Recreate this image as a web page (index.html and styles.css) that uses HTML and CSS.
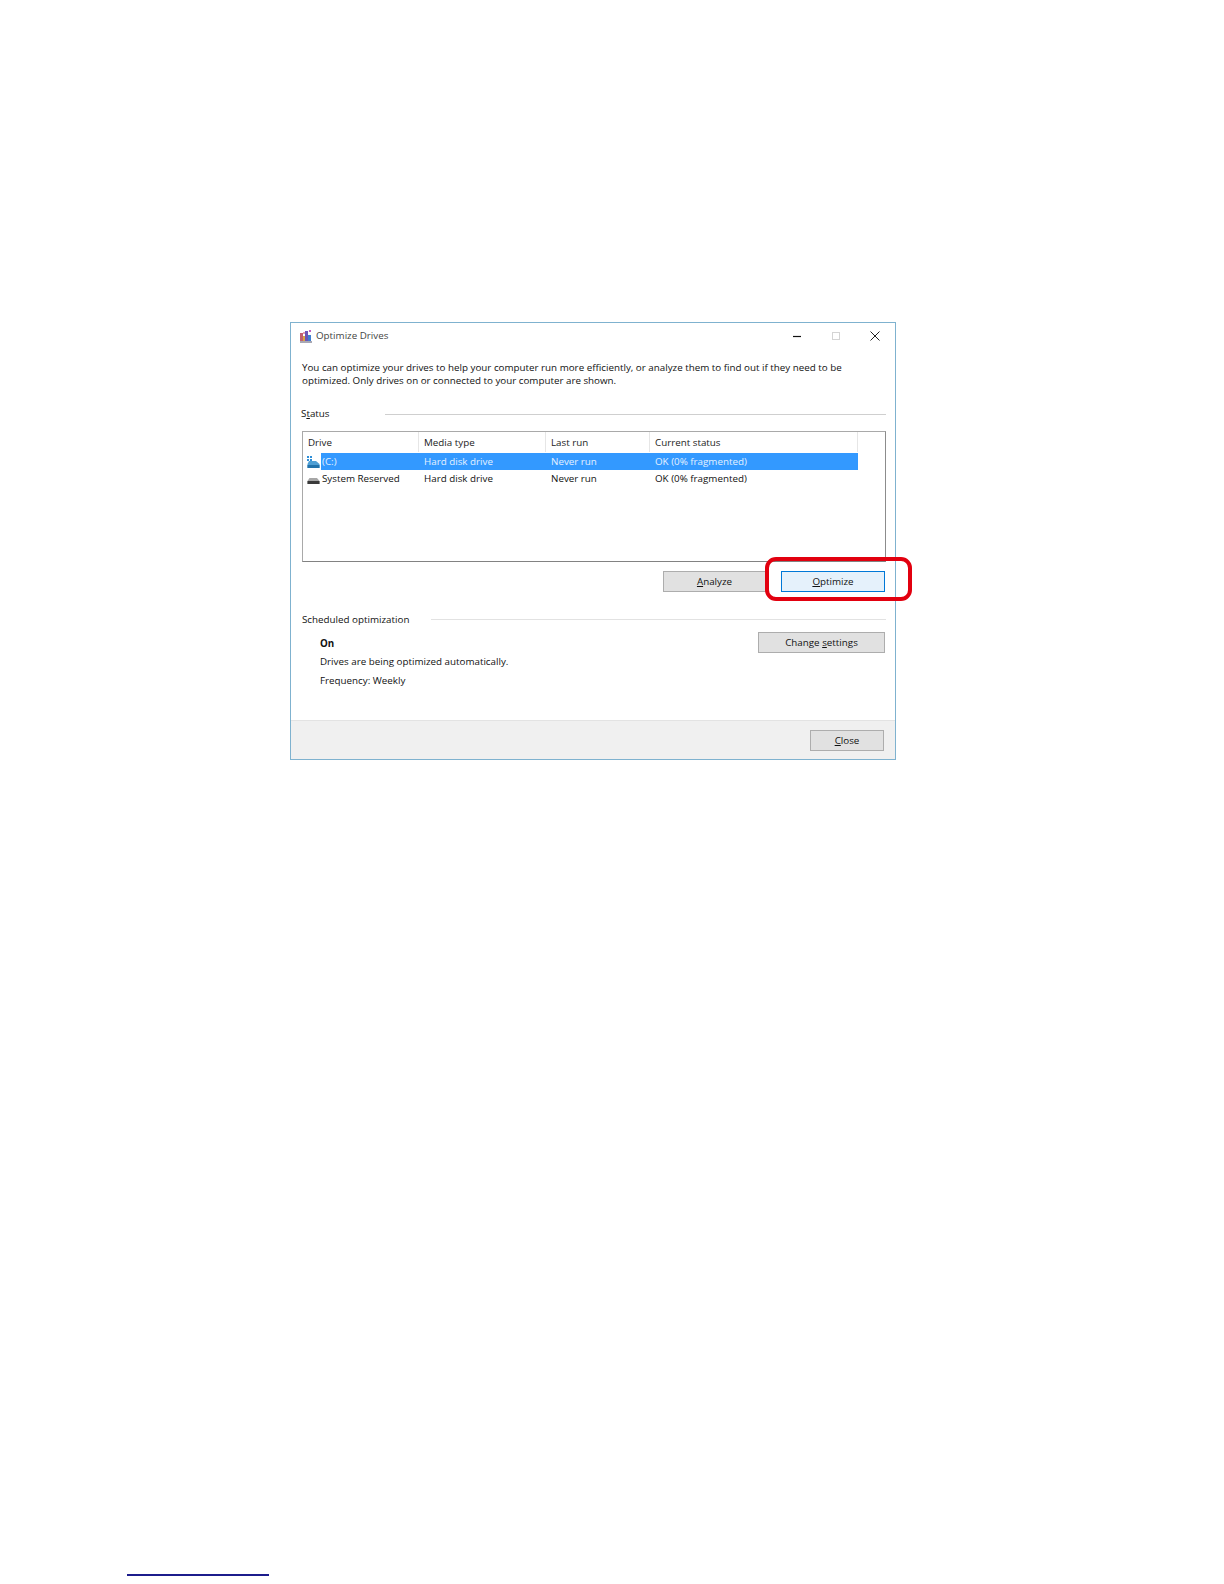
FILE: index.html
```html
<!DOCTYPE html>
<html lang="en">
<head>
<meta charset="utf-8">
<title>Optimize Drives</title>
<link rel="stylesheet" href="styles.css">
</head>
<body>
<main class="page">
  <section class="dialog">
    <header class="titlebar">
      <svg class="app-icon" width="14" height="14" viewBox="0 0 14 14">
        <rect x="1" y="4" width="3" height="8" fill="#c2606e"/>
        <rect x="4" y="7" width="3" height="5" fill="#d9a441"/>
        <rect x="6" y="2" width="3" height="10" fill="#6d55b5"/>
        <rect x="9" y="6" width="3" height="6" fill="#3f7fd0"/>
        <rect x="10" y="1" width="2" height="2" fill="#c060c0"/>
        <rect x="4" y="3" width="2" height="2" fill="#e59ab0"/>
        <rect x="1" y="12" width="12" height="2" fill="#a8a8b4"/>
      </svg>
      <span class="title">Optimize Drives</span>
      <div class="window-controls">
        <svg width="10" height="10" viewBox="0 0 10 10"><path d="M1 5.5H9" stroke="#111" stroke-width="1.2"/></svg>
        <svg width="10" height="10" viewBox="0 0 10 10"><rect x="1.5" y="1.5" width="7" height="7" fill="none" stroke="#d4d4d4"/></svg>
        <svg width="10" height="10" viewBox="0 0 10 10"><path d="M.5 .5L9.5 9.5M9.5 .5L.5 9.5" stroke="#222" stroke-width="1"/></svg>
      </div>
    </header>
    <div class="content">
      <p class="intro">You can optimize your drives to help your computer run more efficiently, or analyze them to find out if they need to be<br>optimized. Only drives on or connected to your computer are shown.</p>
      <div class="group-head status-head"><span class="status-label">S<u>t</u>atus</span><i class="rule dark"></i></div>
      <div class="listbox">
        <div class="row head">
          <span class="cell first">Drive</span>
          <span class="cell">Media type</span>
          <span class="cell">Last run</span>
          <span class="cell">Current status</span>
        </div>
        <div class="row drive selected">
          <span class="cell first name">
            <svg class="drive-icon" width="13" height="12" viewBox="0 0 13 12">
              <rect x="0" y="0" width="2" height="2" fill="#2f8fd8"/><rect x="3" y="0" width="2" height="2" fill="#2f8fd8"/>
              <rect x="0" y="3" width="2" height="2" fill="#2f8fd8"/><rect x="3" y="3" width="2" height="2" fill="#2f8fd8"/>
              <path d="M2 5H9L12.5 8V12H0.5V8Z" fill="#4f9fd4"/><rect x="0.5" y="9" width="12" height="3" fill="#2272aa"/>
            </svg>
            <span class="sel-text">(C:)</span>
          </span>
          <span class="cell sel-text">Hard disk drive</span>
          <span class="cell sel-text">Never run</span>
          <span class="cell sel-text">OK (0% fragmented)</span>
        </div>
        <div class="row drive">
          <span class="cell first name">
            <svg class="drive-icon" width="13" height="12" viewBox="0 0 13 12">
              <path d="M2.5 5H10L12.5 8V11H0.5V8Z" fill="#a6a6a6"/><rect x="0.5" y="8" width="12" height="3" fill="#3a3a3a"/>
            </svg>
            <span>System Reserved</span>
          </span>
          <span class="cell">Hard disk drive</span>
          <span class="cell">Never run</span>
          <span class="cell">OK (0% fragmented)</span>
        </div>
      </div>
      <div class="actions">
        <button class="btn analyze" type="button"><u>A</u>nalyze</button>
        <button class="btn optimize" type="button"><u>O</u>ptimize</button>
        <span class="callout"></span>
      </div>
      <div class="group-head sched-head"><span class="sched-label">Scheduled optimization</span><i class="rule"></i></div>
      <div class="schedule">
        <div class="sched-info">
          <p class="on">On</p>
          <p class="auto">Drives are being optimized automatically.</p>
          <p class="freq">Frequency: Weekly</p>
        </div>
        <button class="btn change" type="button">Change <u>s</u>ettings</button>
      </div>
    </div>
    <footer class="footer">
      <button class="btn close" type="button"><u>C</u>lose</button>
    </footer>
  </section>
  <div class="footnote-rule"></div>
</main>
</body>
</html>
```
FILE: styles.css
```css
* { box-sizing: border-box; }
html, body { margin: 0; padding: 0; background: #fff; }
body { font-family: "Open Sans", "Noto Sans", "Liberation Sans", sans-serif; font-size: 9.8px; color: #111; }
.page { width: 1224px; height: 1584px; padding: 322px 0 0 127px; display: flex; flex-direction: column; overflow: hidden; }
p { margin: 0; }

.dialog { width: 606px; height: 438px; margin-left: 163px; border: 1px solid #7fb2cf; background: #fff; display: flex; flex-direction: column; }

.titlebar { height: 25px; flex: none; display: flex; align-items: center; padding-left: 8px; }
.app-icon { flex: none; }
.title { margin-left: 3px; color: #444; }
.window-controls { margin-left: auto; display: flex; gap: 29px; padding-right: 15px; }

.content { flex: 1; padding: 13px 9px 0 10px; display: flex; flex-direction: column; }
.intro { line-height: 13px; height: 26px; padding-left: 1px; }

.group-head { display: flex; align-items: center; height: 14px; }
.status-head { margin-top: 20px; }
.status-label { width: 84px; position: relative; top: -1px; }
.rule { flex: 1; height: 1px; background: #e2e2e2; }
.rule.dark { background: #cfcfcf; }

.listbox { margin-top: 10px; margin-left: 1px; height: 131px; border: 1px solid #a9a9a9; border-bottom-color: #828282; border-right-color: #8c8c8c; }
.row { display: grid; grid-template-columns: 116px 127px 104px 208px; width: 555px; }
.row.head { height: 21px; align-items: center; border-bottom: 1px solid #fff; }
.head .cell { height: 100%; display: flex; align-items: center; border-right: 1px solid #e6e6e6; color: #222; }
.cell { padding-left: 5px; white-space: nowrap; }
.drive { height: 17px; align-items: center; }
.drive.selected { background: linear-gradient(to right, transparent 18px, #3399ff 18px); }
.sel-text { color: #e4f1ff; }
.name { display: flex; align-items: center; padding-left: 4px; gap: 2px; }
.drive-icon { flex: none; }

.actions { position: relative; height: 21px; margin-top: 9px; display: flex; justify-content: flex-end; align-items: stretch; padding-right: 1px; }
.btn { font: inherit; color: #111; background: #e1e1e1; border: 1px solid #adadad; padding: 0 0 1px; display: block; }
.analyze { width: 103px; margin-right: 15px; }
.optimize { width: 104px; background: #e5f1fb; border-color: #0078d7; }
.callout { position: absolute; left: 464px; top: -14px; width: 147px; height: 44px; border: 4px solid #e2000f; border-radius: 11px; }

.sched-head { margin-top: 20px; }
.sched-label { width: 130px; padding-left: 1px; }

.schedule { display: flex; justify-content: space-between; align-items: flex-start; margin-top: 6px; padding-left: 19px; padding-right: 1px; }
.sched-info { padding-top: 5px; }
.on { font-weight: 700; line-height: 14px; }
.auto { margin-top: 4px; line-height: 14px; }
.freq { margin-top: 5px; line-height: 14px; }
.change { width: 127px; height: 21px; }

.footer { height: 39px; flex: none; margin-top: auto; background: #f0f0f0; border-top: 1px solid #e3e3e3; display: flex; justify-content: flex-end; align-items: flex-start; padding: 9px 11px 0 0; }
.close { width: 74px; height: 21px; }

.footnote-rule { width: 142px; height: 2px; background: #1c1c8c; margin-top: 814px; }
```
